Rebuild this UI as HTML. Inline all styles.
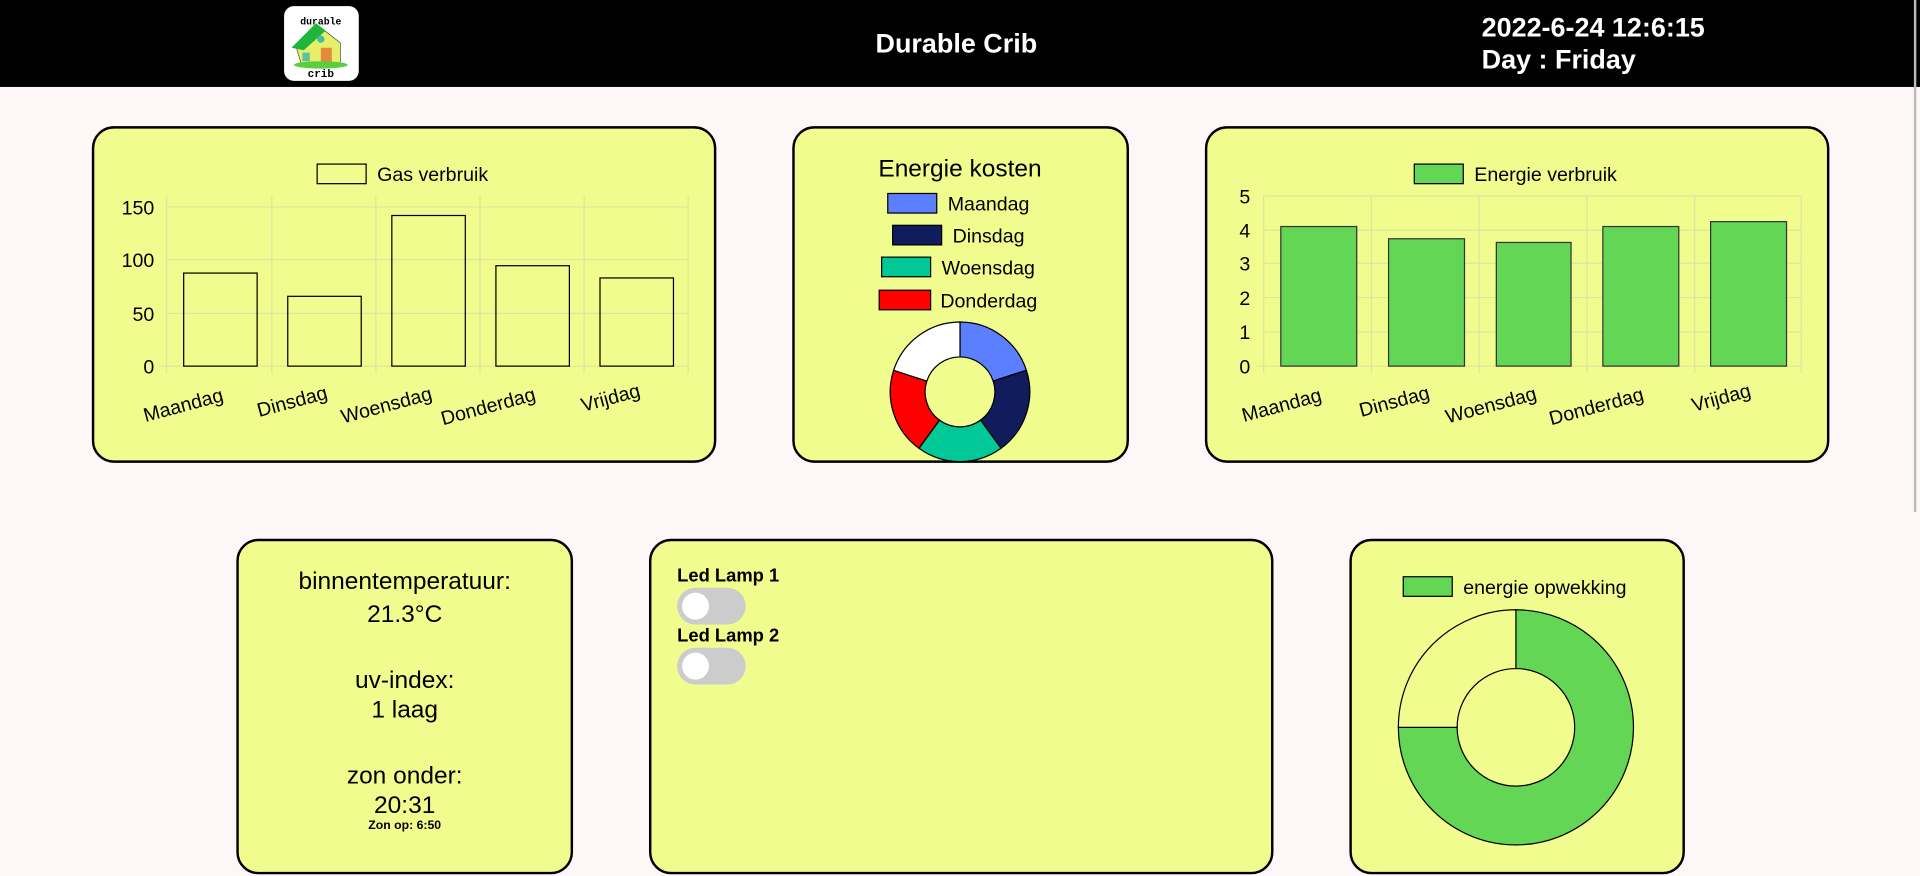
<!DOCTYPE html>
<html><head><meta charset="utf-8"><style>
html,body{margin:0;padding:0;width:1920px;height:876px;overflow:hidden;background:#fdf7f7;font-family:"Liberation Sans",Arial,sans-serif}
#w{position:absolute;left:0;top:0;width:1568px;height:715px;transform:scale(1.22449);transform-origin:0 0}
.hdr{position:absolute;left:0;top:0;width:1568px;height:71px;background:#000}
.logo{position:absolute;left:232px;top:5px;width:61px;height:61px;background:#fff;border-radius:8px}
.t{position:absolute;color:#fff;font-weight:bold;font-size:22px}
.card{position:absolute;background:#f0fc8e;border:2px solid #000;border-radius:18px;box-sizing:border-box}
.c{position:absolute;left:0;width:100%;text-align:center;font-size:20px;color:#000}
.lb{position:absolute;left:21px;font-weight:bold;font-size:15px}
.tg{position:absolute;left:21px;width:56px;height:30px;background:#ccc;border-radius:15px}
.tg:after{content:"";position:absolute;left:4px;top:4px;width:22px;height:22px;border-radius:50%;background:#fff}
svg{position:absolute;left:0;top:0}
</style></head><body><div id="w">
<div class="hdr"></div>
<div class="logo"><svg width="61" height="61" viewBox="0 0 61 61">
<text x="30" y="15" font-size="8" text-anchor="middle" font-family="Liberation Mono" font-weight="bold">durable</text>
<path d="M10 34 L28 16 L46 30 L46 47 L14 47 Z" fill="#e6ef6a" stroke="#333" stroke-width=".5"/>
<path d="M6 34 L26 14 L34 20 L16 36 Z" fill="#1fb53a"/>
<rect x="30" y="34" width="9" height="13" fill="#e58a3a"/><circle cx="30" cy="27" r="3" fill="#3fbf9a"/>
<rect x="15" y="38" width="6" height="7" fill="#58c4a0"/>
<ellipse cx="30" cy="48" rx="22" ry="3" fill="#5ccd3c"/>
<text x="30" y="58" font-size="9" text-anchor="middle" font-family="Liberation Mono" font-weight="bold">crib</text></svg></div>
<div class="t" style="left:715px;top:23px">Durable Crib</div>
<div class="t" style="left:1210px;top:10px;line-height:26px">2022-6-24 12:6:15<br>Day : Friday</div>
<div style="position:absolute;left:1563px;top:0;width:2px;height:418px;background:#bbb"></div>

<div class="card" style="left:75px;top:103px;width:510px;height:275px"></div>
<div class="card" style="left:647px;top:103px;width:275px;height:275px"></div>
<div class="card" style="left:984px;top:103px;width:510px;height:275px"></div>
<div class="card" style="left:193px;top:440px;width:275px;height:274px">
<div class="c" style="top:22px">binnentemperatuur:</div>
<div class="c" style="top:49px">21.3°C</div>
<div class="c" style="top:103px">uv-index:</div>
<div class="c" style="top:127px">1 laag</div>
<div class="c" style="top:181px">zon onder:</div>
<div class="c" style="top:205px">20:31</div>
<div class="c" style="top:227px;font-size:10px;font-weight:bold">Zon op: 6:50</div>
</div>
<div class="card" style="left:530px;top:440px;width:510px;height:274px">
<div class="lb" style="top:20px">Led Lamp 1</div><div class="tg" style="top:38px"></div>
<div class="lb" style="top:69px">Led Lamp 2</div><div class="tg" style="top:87px"></div>
</div>
<div class="card" style="left:1102px;top:440px;width:274px;height:274px"></div>

<svg width="1568" height="715" font-family="Liberation Sans" font-size="16">
<!-- gas chart -->
<rect x="259" y="134" width="40" height="16" fill="none" stroke="#000"/>
<text x="308" y="148">Gas verbruik</text>
<g stroke="#dbe79a" stroke-width="1">
<line x1="136" y1="169" x2="562" y2="169"/><line x1="136" y1="212" x2="562" y2="212"/><line x1="136" y1="256" x2="562" y2="256"/>
<line x1="136" y1="160" x2="136" y2="305"/><line x1="222" y1="160" x2="222" y2="305"/><line x1="307" y1="160" x2="307" y2="305"/><line x1="392" y1="160" x2="392" y2="305"/><line x1="477" y1="160" x2="477" y2="305"/><line x1="562" y1="160" x2="562" y2="305"/>
<line x1="130" y1="299" x2="562" y2="299"/></g>
<g text-anchor="end"><text x="126" y="175">150</text><text x="126" y="218">100</text><text x="126" y="262">50</text><text x="126" y="305">0</text></g>
<g fill="none" stroke="#000"><rect x="150" y="223" width="60" height="76"/><rect x="235" y="242" width="60" height="57"/><rect x="320" y="176" width="60" height="123"/><rect x="405" y="217" width="60" height="82"/><rect x="490" y="227" width="60" height="72"/></g>
<g text-anchor="middle">
<text transform="translate(151,336) rotate(-15)">Maandag</text><text transform="translate(240,333) rotate(-15)">Dinsdag</text><text transform="translate(317,336) rotate(-15)">Woensdag</text><text transform="translate(400,337) rotate(-15)">Donderdag</text><text transform="translate(500,330) rotate(-15)">Vrijdag</text></g>
<!-- energy chart -->
<rect x="1155" y="134" width="40" height="16" fill="#63d655" stroke="#000"/>
<text x="1204" y="148">Energie verbruik</text>
<g stroke="#dbe79a"><line x1="1032" y1="160" x2="1471" y2="160"/><line x1="1032" y1="188" x2="1471" y2="188"/><line x1="1032" y1="215" x2="1471" y2="215"/><line x1="1032" y1="243" x2="1471" y2="243"/><line x1="1032" y1="271" x2="1471" y2="271"/>
<line x1="1032" y1="160" x2="1032" y2="305"/><line x1="1120" y1="160" x2="1120" y2="305"/><line x1="1208" y1="160" x2="1208" y2="305"/><line x1="1296" y1="160" x2="1296" y2="305"/><line x1="1384" y1="160" x2="1384" y2="305"/><line x1="1471" y1="160" x2="1471" y2="305"/>
<line x1="1026" y1="299" x2="1471" y2="299"/></g>
<g text-anchor="end"><text x="1021" y="166">5</text><text x="1021" y="194">4</text><text x="1021" y="221">3</text><text x="1021" y="249">2</text><text x="1021" y="277">1</text><text x="1021" y="305">0</text></g>
<g fill="#63d655" stroke="#333"><rect x="1046" y="185" width="62" height="114"/><rect x="1134" y="195" width="62" height="104"/><rect x="1222" y="198" width="61" height="101"/><rect x="1309" y="185" width="62" height="114"/><rect x="1397" y="181" width="62" height="118"/></g>
<g text-anchor="middle">
<text transform="translate(1048,336) rotate(-15)">Maandag</text><text transform="translate(1140,333) rotate(-15)">Dinsdag</text><text transform="translate(1219,336) rotate(-15)">Woensdag</text><text transform="translate(1305,337) rotate(-15)">Donderdag</text><text transform="translate(1407,330) rotate(-15)">Vrijdag</text></g>
<!-- energie kosten -->
<text x="784" y="144" font-size="20" text-anchor="middle">Energie kosten</text>
<rect x="725" y="158" width="40" height="16" fill="#5b7fff" stroke="#000"/><text x="774" y="172">Maandag</text>
<rect x="729" y="184" width="40" height="16" fill="#101c5c" stroke="#000"/><text x="778" y="198">Dinsdag</text>
<rect x="720" y="210" width="40" height="16" fill="#00c896" stroke="#000"/><text x="769" y="224">Woensdag</text>
<rect x="718" y="237" width="42" height="16" fill="#f00" stroke="#000"/><text x="768" y="251">Donderdag</text>
<g stroke="#000" stroke-width="1">
<path d="M784 263 A57 57 0 0 1 838.2 302.4 L811.1 311.2 A28.5 28.5 0 0 0 784 291.5Z" fill="#5b7fff"/>
<path d="M838.2 302.4 A57 57 0 0 1 817.5 366.1 L800.8 343.1 A28.5 28.5 0 0 0 811.1 311.2Z" fill="#101c5c"/>
<path d="M817.5 366.1 A57 57 0 0 1 750.5 366.1 L767.2 343.1 A28.5 28.5 0 0 0 800.8 343.1Z" fill="#00c896"/>
<path d="M750.5 366.1 A57 57 0 0 1 729.8 302.4 L756.9 311.2 A28.5 28.5 0 0 0 767.2 343.1Z" fill="#f00"/>
<path d="M729.8 302.4 A57 57 0 0 1 784 263 L784 291.5 A28.5 28.5 0 0 0 756.9 311.2Z" fill="#fff"/>
</g>
<!-- opwekking -->
<rect x="1146" y="471" width="40" height="16" fill="#63d655" stroke="#000"/><text x="1195" y="485">energie opwekking</text>
<g stroke="#000">
<path d="M1238 498 A96 96 0 1 1 1142 594 L1190 594 A48 48 0 1 0 1238 546Z" fill="#63d655"/>
<path d="M1142 594 A96 96 0 0 1 1238 498 L1238 546 A48 48 0 0 0 1190 594Z" fill="#f0fc8e"/>
</g>
</svg>
</div></body></html>
